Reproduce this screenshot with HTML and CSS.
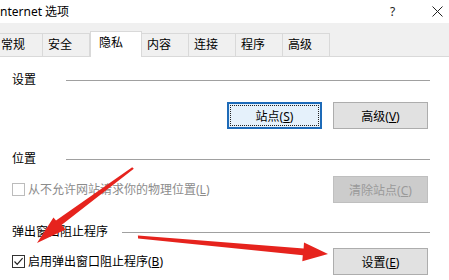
FILE: index.html
```html
<!DOCTYPE html>
<html lang="zh-CN">
<head>
<meta charset="utf-8">
<title>Internet 选项</title>
<link rel="stylesheet" href="styles.css">
</head>
<body>
<div class="win">
  <div class="titlebar">
    <span class="title">nternet 选项</span>
    <span class="help">?</span>
    <svg class="close" width="11" height="11" viewBox="0 0 11 11"><path d="M0.5 0.5 L10.5 10.5 M10.5 0.5 L0.5 10.5" stroke="#222" stroke-width="1" fill="none"/></svg>
  </div>
  <div class="tabstrip">
    <div class="tab first">常规</div>
    <div class="tab">安全</div>
    <div class="tab sel">隐私</div>
    <div class="tab">内容</div>
    <div class="tab">连接</div>
    <div class="tab">程序</div>
    <div class="tab">高级</div>
  </div>
  <div class="page">
    <div class="group-head s1"><span class="glabel">设置</span><span class="gline"></span></div>
    <div class="row right r1">
      <button class="btn focus">站点(<u>S</u>)</button>
      <button class="btn">高级(<u>V</u>)</button>
    </div>

    <div class="group-head s2"><span class="glabel">位置</span><span class="gline"></span></div>
    <div class="row split r2">
      <label class="chk disabled"><span class="box"></span><span class="ctext">从不允许网站请求你的物理位置(<u>L</u>)</span></label>
      <button class="btn disabled">清除站点(<u>C</u>)</button>
    </div>

    <div class="group-head s3"><span class="glabel">弹出窗口阻止程序</span><span class="gline"></span></div>
    <div class="row split r3">
      <label class="chk"><span class="box"><svg width="11" height="11" viewBox="0 0 11 11"><path d="M1.5 5.5 L4.2 8.3 L9.6 2.2" stroke="#222" stroke-width="1.2" fill="none"/></svg></span><span class="ctext">启用弹出窗口阻止程序(<u>B</u>)</span></label>
      <button class="btn">设置(<u>E</u>)</button>
    </div>
  </div>
  <svg class="arrows" width="449" height="280" viewBox="0 0 449 280">
    <polygon fill="#e6231d" points="133.8,168.8 132.2,167.2 56,220.5 53.5,217.5 37,243 65.5,229.5 61.5,225"/>
    <polygon fill="#e6231d" points="138.1,238.4 137.9,235.6 303.6,248.4 304,242.6 328,254 302.3,261.2 302.8,255.2"/>
  </svg>
</div>
</body>
</html>
```
FILE: styles.css
```css
html, body {
  margin: 0;
  padding: 0;
  background: #ffffff;
}
body {
  font-family: "Noto Sans", "Noto Sans CJK SC", sans-serif;
  font-size: 12px;
  color: #000;
}
.win {
  position: relative;
  width: 449px;
  height: 280px;
  overflow: hidden;
  background: #fff;
}
.titlebar {
  height: 23px;
  display: flex;
  align-items: center;
  background: #fff;
}
.title {
  font-size: 12px;
  line-height: 16px;
  flex: 1;
}
.help {
  width: 14px;
  margin-right: 28px;
  font-size: 12px;
  color: #222;
}
.close {
  margin-right: 6px;
}
.tabstrip {
  height: 34px;
  box-sizing: border-box;
  background: #f0f0f0;
  border-bottom: 1px solid #d9d9d9;
  display: flex;
  align-items: flex-end;
}
.tab {
  width: 47px;
  height: 23px;
  box-sizing: border-box;
  border: 1px solid #d9d9d9;
  border-bottom: none;
  border-left: none;
  background: #f0f0f0;
  padding-left: 5px;
  line-height: 21px;
  color: #000;
}
.tab.first {
  margin-left: -4px;
}
.tab.sel {
  width: 52px;
  height: 26px;
  margin-bottom: -1px;
  border-left: 1px solid #d9d9d9;
  background: #fff;
  line-height: 22px;
  padding-left: 8px;
}
.page {
  padding: 0 19px 0 12px;
}
.group-head {
  display: flex;
  align-items: center;
  height: 16px;
}
.glabel {
  min-width: 54px;
  padding-right: 14px;
  box-sizing: border-box;
  line-height: 16px;
  white-space: nowrap;
}
.gline {
  flex: 1;
  height: 1px;
  background: #a0a0a0;
}
.s1 { margin-top: 15px; }
.s2 { margin-top: 22px; }
.s3 { margin-top: 21px; }
.row {
  display: flex;
  align-items: center;
  height: 27px;
}
.row.right { justify-content: flex-end; gap: 11px; padding-right: 2px; }
.row.split { justify-content: space-between; padding-right: 2px; }
.r1 { margin-top: 14px; }
.r2 { margin-top: 9px; }
.r3 { margin-top: 8px; }
.btn {
  width: 95px;
  height: 27px;
  box-sizing: border-box;
  border: 1px solid #adadad;
  background: #e1e1e1;
  font-family: "Noto Sans", "Noto Sans CJK SC", sans-serif;
  font-size: 12px;
  color: #000;
  padding: 0;
  margin: 0;
}
.btn.focus {
  border: 2px solid #1e6bb8;
  outline: 1px dotted #222;
  outline-offset: -4px;
  background: #e5f1fb;
}
.btn.disabled {
  background: #cccccc;
  border-color: #bfbfbf;
  color: #9a9a9a;
}
.chk {
  display: flex;
  align-items: center;
  gap: 3px;
  line-height: 16px;
}
.ctext {
  white-space: nowrap;
}
.box {
  width: 13px;
  height: 13px;
  box-sizing: border-box;
  border: 1px solid #333;
  background: #fff;
  display: flex;
  align-items: center;
  justify-content: center;
}
.chk.disabled {
  color: #8c8c8c;
}
.chk.disabled .box {
  border-color: #bcbcbc;
}
.arrows {
  position: absolute;
  top: 0;
  left: 0;
  pointer-events: none;
}
```
